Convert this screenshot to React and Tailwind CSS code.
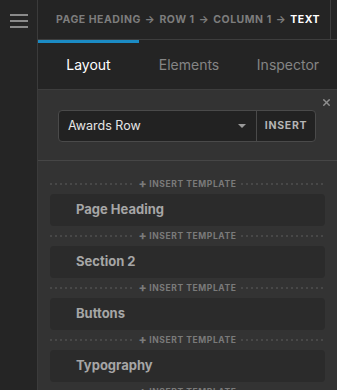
import React from 'react';
import { X } from 'lucide-react';

const items = ['Page Heading', 'Section 2', 'Buttons', 'Typography'];

const InsertTemplate = () => (
  <div className="flex items-center h-[20px] gap-[4px]">
    <div className="flex-1 h-[2px] bg-[linear-gradient(to_right,#484848_2px,transparent_2px)] bg-[length:5px_2px]" />
    <div className="flex items-center gap-[2px] text-[8.5px] font-bold tracking-[0.07em] text-[#7a7a7a] leading-none">
      <span className="text-[12px] font-extrabold leading-none -mt-[1px]">+</span>
      <span>INSERT TEMPLATE</span>
    </div>
    <div className="flex-1 h-[2px] bg-[linear-gradient(to_right,#484848_2px,transparent_2px)] bg-[length:5px_2px]" />
  </div>
);

const App = () => (
  <div className="flex w-[337px] h-[390px] overflow-hidden bg-[#333333] font-['Inter',_'Liberation_Sans',_sans-serif]">
    {/* sidebar */}
    <div className="w-[38px] shrink-0 bg-[#252525] border-r border-[#3b3b3b] flex justify-center pt-[14px]">
      <div className="flex flex-col gap-[4px] w-[18px]">
        <div className="h-[2px] bg-[#8a8a8a]" />
        <div className="h-[2px] bg-[#8a8a8a]" />
        <div className="h-[2px] bg-[#8a8a8a]" />
      </div>
    </div>

    <div className="flex-1 flex flex-col min-w-0">
      {/* breadcrumb */}
      <div className="h-[40px] shrink-0 flex bg-[#242424] border-b border-[#3d3d3d]">
        <div className="flex-1 flex items-center pl-[18px] text-[10.5px] font-bold tracking-[0.05em] text-[#7d7d7d] whitespace-nowrap">
          PAGE HEADING <span className="mx-[4px]">→</span> ROW 1 <span className="mx-[4px]">→</span> COLUMN 1 <span className="mx-[4px]">→</span> <span className="text-white">TEXT</span>
        </div>
        <div className="w-[7px] border-l border-[#3d3d3d]" />
      </div>

      {/* tabs */}
      <div className="h-[50px] shrink-0 flex bg-[#242424] border-b border-[#3d3d3d] text-[14px]">
        <div className="w-[101px] flex items-center justify-center border-t-[3px] border-[#1b8bc4] pb-[3px] text-white">Layout</div>
        <div className="w-[100px] flex items-center justify-center text-[#858585]">Elements</div>
        <div className="flex-1 flex items-center justify-center text-[#858585]">Inspector</div>
      </div>

      {/* template picker */}
      <div className="relative h-[71px] shrink-0 border-b border-[#464646] flex items-start pt-[20px] pl-[20px]">
        <X className="absolute right-[5px] top-[7px] w-[11px] h-[11px] text-[#8f8f8f]" strokeWidth={3} />
        <div className="flex h-[32px] w-[258px] rounded-[4px] border border-[#4a4a4a] bg-[#222222] overflow-hidden">
          <div className="flex-1 flex items-center pl-[9px] pr-[10px] text-[12.5px] text-[#e6e6e6]">
            <span className="flex-1">Awards Row</span>
            <span className="w-0 h-0 border-l-[4px] border-r-[4px] border-t-[4px] border-l-transparent border-r-transparent border-t-[#9a9a9a]" />
          </div>
          <div className="w-[59px] flex items-center justify-center border-l border-[#4a4a4a] text-[10.5px] font-bold tracking-[0.07em] text-[#b5b5b5]">
            INSERT
          </div>
        </div>
      </div>

      {/* list */}
      <div className="flex flex-col pl-[12px] pr-[12px] pt-[13px]">
        {items.map((name) => (
          <div key={name} className="flex flex-col">
            <InsertTemplate />
            <div className="h-[32px] rounded-[4px] bg-[#2b2b2b] flex items-center pl-[26px] text-[13px] font-bold text-[#a6a6a6]">
              {name}
            </div>
          </div>
        ))}
        <InsertTemplate />
      </div>
    </div>
  </div>
);

export default App;
